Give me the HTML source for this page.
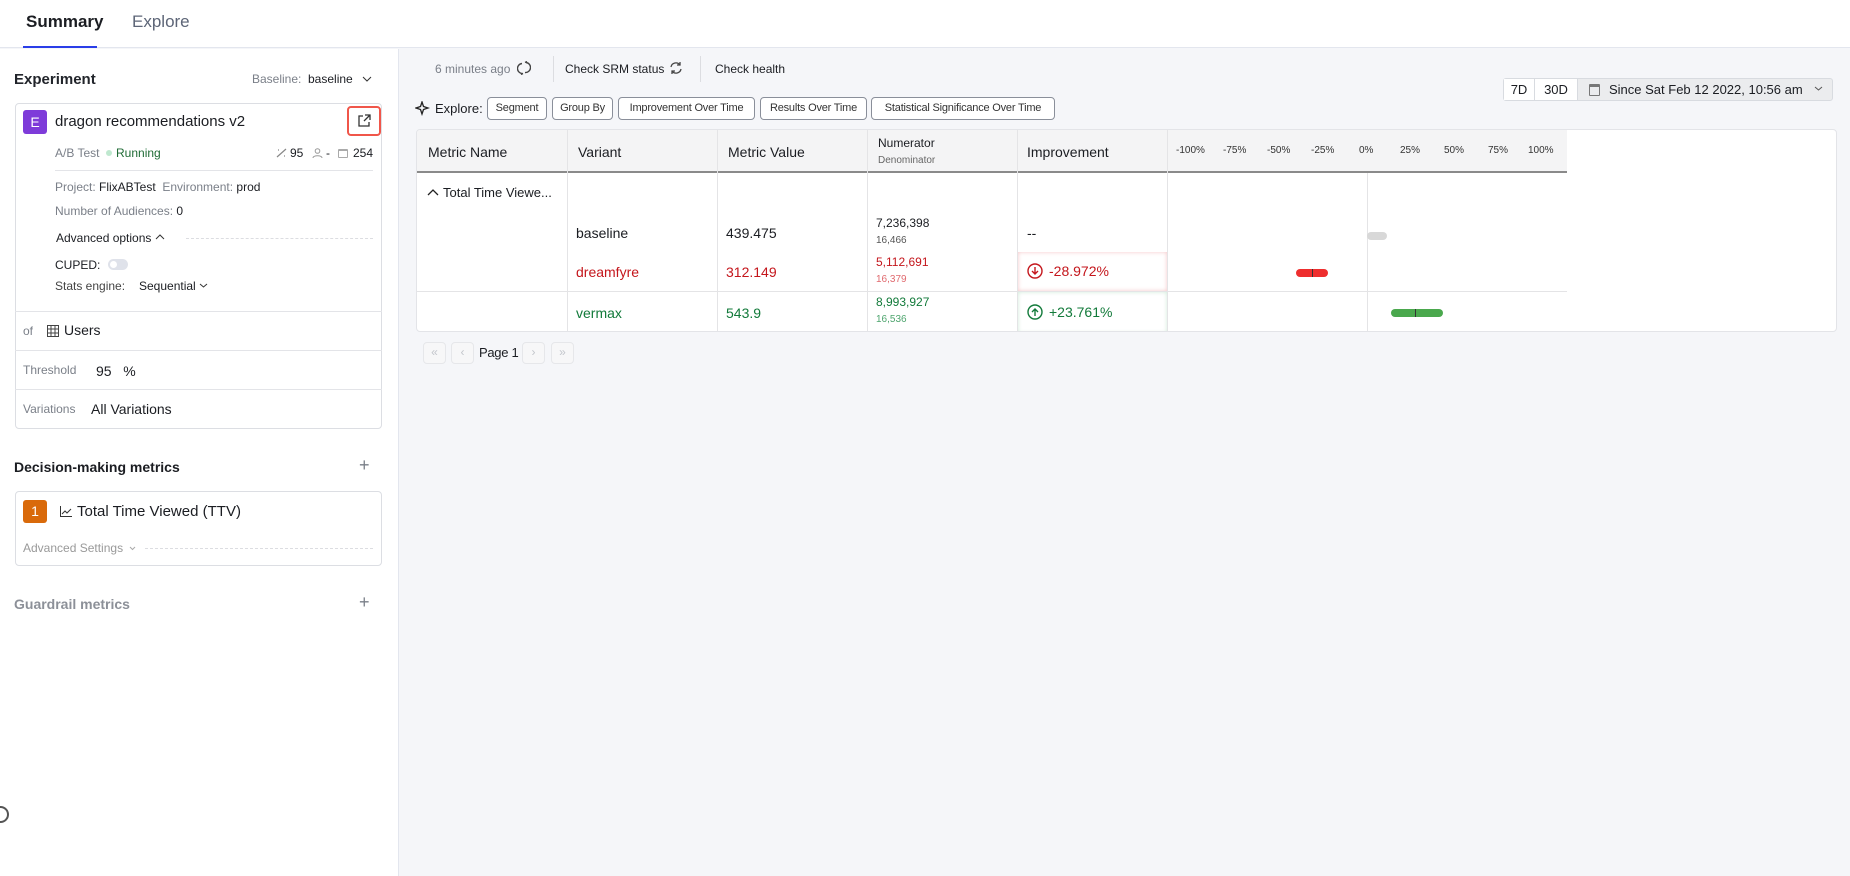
<!DOCTYPE html>
<html><head><meta charset="utf-8"><style>
*{box-sizing:border-box;margin:0;padding:0}
body{width:1850px;height:876px;position:relative;overflow:hidden;background:#f5f6f9;font-family:"Liberation Sans",sans-serif;color:#1b1d22;font-size:13px}
.a{position:absolute;white-space:nowrap}
.g{color:#7a7f88}
.chip{position:absolute;top:97px;height:23px;border:1px solid #8a8f9a;border-radius:4px;background:#fff;font-size:11px;line-height:21px;text-align:center;color:#333;letter-spacing:-0.2px}
.col{position:absolute;top:0;bottom:0;border-left:1px solid #e4e4e6}
.pg{position:absolute;top:342px;width:23px;height:22px;border:1px solid #e6e7ea;border-radius:4px;background:#f7f7f8;color:#c3c6cc;font-size:12px;text-align:center;line-height:19px}
</style></head><body>
<div class="a" style="left:0;top:0;width:1850px;height:48px;background:#fff;border-bottom:1px solid #e3e6ee"></div>
<div class="a" style="left:26px;top:12px;font-size:17px;font-weight:bold;color:#1b1d22">Summary</div>
<div class="a" style="left:132px;top:12px;font-size:17px;color:#5d6577">Explore</div>
<div class="a" style="left:23px;top:46px;width:74px;height:2px;background:#2a3ee8"></div>
<div class="a" style="left:0;top:49px;width:399px;height:827px;background:#fff;border-right:1px solid #e3e6ee"></div>
<div class="a" style="left:14px;top:71px;font-size:15px;font-weight:600;color:#22252b">Experiment</div>
<div class="a g" style="left:252px;top:72px;font-size:12px">Baseline:</div>
<div class="a" style="left:308px;top:72px;font-size:12px">baseline</div>
<svg class="a" style="left:362px;top:75px" width="10" height="8"><path d="M1 2l4 4 4-4" stroke="#333" fill="none"/></svg>
<div class="a" style="left:15px;top:103px;width:367px;height:326px;border:1px solid #dcdee3;border-radius:4px;background:#fff"></div>
<div class="a" style="left:23px;top:110px;width:24px;height:24px;background:#7e3bd9;border-radius:3px;color:#fff;font-size:14px;text-align:center;line-height:24px">E</div>
<div class="a" style="left:55px;top:113px;font-size:15px">dragon recommendations v2</div>
<div class="a" style="left:347px;top:106px;width:34px;height:30px;border:2px solid #f0564a;border-radius:4px"></div>
<svg class="a" style="left:357px;top:114px" width="14" height="14"><path d="M6 2H2v10h10V8M8 1h5v5M13 1L7 7" stroke="#333" fill="none" stroke-width="1.3"/></svg>
<div class="a g" style="left:55px;top:146px;font-size:12px">A/B Test</div>
<div class="a" style="left:106px;top:150px;width:6px;height:6px;border-radius:3px;background:#bfe8cf"></div>
<div class="a" style="left:116px;top:146px;font-size:12px;color:#1f6b35">Running</div>
<svg class="a" style="left:276px;top:148px" width="11" height="10"><path d="M1 9L10 1M2 2h1M8 8h1" stroke="#888" fill="none" stroke-width="1.2"/></svg>
<div class="a" style="left:290px;top:146px;font-size:12px">95</div>
<svg class="a" style="left:312px;top:148px" width="11" height="10"><circle cx="5.5" cy="3" r="2.3" stroke="#999" fill="none"/><path d="M1 10c0-3 9-3 9 0" stroke="#999" fill="none"/></svg>
<div class="a" style="left:326px;top:146px;font-size:12px">-</div>
<div class="a" style="left:338px;top:149px;width:10px;height:9px;border:1px solid #aaa;border-radius:1px;border-top-width:2px"></div>
<div class="a" style="left:353px;top:146px;font-size:12px">254</div>
<div class="a" style="left:55px;top:170px;width:318px;height:1px;background:#e3e4e8"></div>
<div class="a" style="left:55px;top:180px;font-size:12px"><span class="g">Project: </span>FlixABTest <span class="g">&nbsp;Environment: </span>prod</div>
<div class="a" style="left:55px;top:204px;font-size:12px"><span class="g">Number of Audiences: </span>0</div>
<div class="a" style="left:56px;top:231px;font-size:12px">Advanced options</div>
<svg class="a" style="left:155px;top:233px" width="10" height="8"><path d="M1 6l4-4 4 4" stroke="#333" fill="none"/></svg>
<div class="a" style="left:186px;top:238px;width:187px;border-top:1px dashed #dcdde1"></div>
<div class="a" style="left:55px;top:258px;font-size:12px">CUPED:</div>
<div class="a" style="left:108px;top:259px;width:20px;height:11px;border-radius:6px;background:#dfe2ea"><div style="margin:2px;width:7px;height:7px;border-radius:4px;background:#fff"></div></div>
<div class="a" style="left:55px;top:279px;font-size:12px;color:#444">Stats engine:</div>
<div class="a" style="left:139px;top:279px;font-size:12px">Sequential</div>
<svg class="a" style="left:199px;top:282px" width="9" height="7"><path d="M1 2l3.5 3L8 2" stroke="#333" fill="none"/></svg>
<div class="a" style="left:15px;top:311px;width:367px;height:1px;background:#e3e4e8"></div>
<div class="a g" style="left:23px;top:324px;font-size:12px">of</div>
<svg class="a" style="left:47px;top:325px" width="12" height="12"><rect x="0.5" y="0.5" width="11" height="11" fill="none" stroke="#444"/><path d="M0 4h12M0 8h12M4 0v12M8 0v12" stroke="#444"/></svg>
<div class="a" style="left:64px;top:322px;font-size:14px">Users</div>
<div class="a" style="left:15px;top:350px;width:367px;height:1px;background:#e3e4e8"></div>
<div class="a g" style="left:23px;top:363px;font-size:12px">Threshold</div>
<div class="a" style="left:96px;top:363px;font-size:14px">95 &nbsp;&nbsp;%</div>
<div class="a" style="left:15px;top:389px;width:367px;height:1px;background:#e3e4e8"></div>
<div class="a g" style="left:23px;top:402px;font-size:12px">Variations</div>
<div class="a" style="left:91px;top:401px;font-size:14px">All Variations</div>
<div class="a" style="left:14px;top:459px;font-size:14px;font-weight:600">Decision-making metrics</div>
<div class="a g" style="left:359px;top:455px;font-size:18px">+</div>
<div class="a" style="left:15px;top:491px;width:367px;height:75px;border:1px solid #dcdee3;border-radius:4px;background:#fff"></div>
<div class="a" style="left:23px;top:500px;width:24px;height:23px;background:#d96a0b;border-radius:3px;color:#fff;font-size:14px;text-align:center;line-height:23px">1</div>
<svg class="a" style="left:60px;top:506px" width="12" height="11"><path d="M0.5 0v10.5H12M2 8l3-3 2 2 4-4" stroke="#333" fill="none"/></svg>
<div class="a" style="left:77px;top:503px;font-size:15px">Total Time Viewed (TTV)</div>
<div class="a" style="left:23px;top:541px;font-size:12px;color:#999">Advanced Settings</div>
<svg class="a" style="left:129px;top:546px" width="7" height="5"><path d="M1 1l2.5 2.5L6 1" stroke="#aaa" fill="none"/></svg>
<div class="a" style="left:145px;top:548px;width:228px;border-top:1px dashed #dcdde1"></div>
<div class="a" style="left:14px;top:596px;font-size:14px;font-weight:600;color:#8c9098">Guardrail metrics</div>
<div class="a g" style="left:359px;top:592px;font-size:18px">+</div>
<div class="a" style="left:-8px;top:806px;width:17px;height:17px;border:2px solid #555;border-radius:9px;background:#fff"></div>
<div class="a g" style="left:435px;top:62px;font-size:12px">6 minutes ago</div>
<svg class="a" style="left:517px;top:61px" width="14" height="14"><path d="M5 2.5A5 5 0 0 0 6 12.5M9 1.5A5 5 0 0 1 8 11.5M6 12.5l-2 1M8 1.5l2-1" stroke="#444" fill="none" stroke-width="1.4"/></svg>
<div class="a" style="left:553px;top:56px;width:1px;height:26px;background:#dcdde1"></div>
<div class="a" style="left:565px;top:62px;font-size:12px">Check SRM status</div>
<svg class="a" style="left:669px;top:61px" width="14" height="14"><path d="M2 6a5 5 0 0 1 9-2M12 8a5 5 0 0 1-9 2M11 1v3H8M3 13v-3h3" stroke="#444" fill="none" stroke-width="1.3"/></svg>
<div class="a" style="left:700px;top:56px;width:1px;height:26px;background:#dcdde1"></div>
<div class="a" style="left:715px;top:62px;font-size:12px">Check health</div>
<svg class="a" style="left:415px;top:101px" width="15" height="15"><path d="M7 1l1.5 4.5L13 7l-4.5 1.5L7 13l-1.5-4.5L1 7l4.5-1.5z" stroke="#222" fill="none" stroke-width="1.3"/></svg>
<div class="a" style="left:435px;top:101px;font-size:13px">Explore:</div>
<div class="chip" style="left:487px;width:60px">Segment</div>
<div class="chip" style="left:552px;width:61px">Group By</div>
<div class="chip" style="left:618px;width:137px">Improvement Over Time</div>
<div class="chip" style="left:760px;width:107px">Results Over Time</div>
<div class="chip" style="left:871px;width:184px">Statistical Significance Over Time</div>
<div class="a" style="left:1503px;top:78px;width:330px;height:23px;border:1px solid #d8dbe0;border-radius:3px;background:#ebecee"></div>
<div class="a" style="left:1504px;top:79px;width:31px;height:21px;background:#fff;border-right:1px solid #d8dbe0;font-size:13px;text-align:center;line-height:21px">7D</div>
<div class="a" style="left:1535px;top:79px;width:43px;height:21px;background:#fff;border-right:1px solid #d8dbe0;font-size:13px;text-align:center;line-height:21px">30D</div>
<div class="a" style="left:1589px;top:84px;width:11px;height:12px;border:1px solid #777;border-radius:1px;border-top-width:3px"></div>
<div class="a" style="left:1609px;top:82px;font-size:13px">Since Sat Feb 12 2022, 10:56 am</div>
<svg class="a" style="left:1814px;top:86px" width="9" height="6"><path d="M1 1l3.5 3L8 1" stroke="#555" fill="none"/></svg>
<div class="a" style="left:416px;top:129px;width:1421px;height:203px;background:#fff;border:1px solid #e3e4e8;border-radius:4px;overflow:hidden">
 <div class="a" style="left:0;top:0;width:1150px;height:43px;background:#f4f4f5;border-bottom:2px solid #8a8a8a"></div>
 <div class="col" style="left:150px"></div>
 <div class="col" style="left:300px"></div>
 <div class="col" style="left:450px"></div>
 <div class="col" style="left:600px"></div>
 <div class="col" style="left:750px"></div>
 <div class="col" style="left:950px;top:43px"></div>
 <div class="a" style="left:0;top:161px;width:1150px;height:1px;background:#e4e4e6"></div>
 <div class="a" style="left:11px;top:14px;font-size:14px">Metric Name</div>
 <div class="a" style="left:161px;top:14px;font-size:14px">Variant</div>
 <div class="a" style="left:311px;top:14px;font-size:14px">Metric Value</div>
 <div class="a" style="left:461px;top:6px;font-size:12px">Numerator</div>
 <div class="a" style="left:461px;top:25px;font-size:10px;color:#666">Denominator</div>
 <div class="a" style="left:610px;top:14px;font-size:14px">Improvement</div>
 <div class="a" style="left:759px;top:15px;font-size:10px;color:#333;width:390px">
  <span class="a" style="left:0">-100%</span><span class="a" style="left:47px">-75%</span><span class="a" style="left:91px">-50%</span><span class="a" style="left:135px">-25%</span><span class="a" style="left:183px">0%</span><span class="a" style="left:224px">25%</span><span class="a" style="left:268px">50%</span><span class="a" style="left:312px">75%</span><span class="a" style="left:352px">100%</span>
 </div>
 <svg class="a" style="left:10px;top:58px" width="12" height="8"><path d="M1 7l5-5 5 5" stroke="#222" fill="none" stroke-width="1.3"/></svg>
 <div class="a" style="left:26px;top:55px;font-size:13px">Total Time Viewe...</div>
 <div class="a" style="left:159px;top:95px;font-size:14px">baseline</div>
 <div class="a" style="left:309px;top:95px;font-size:14px">439.475</div>
 <div class="a" style="left:459px;top:86px;font-size:12px">7,236,398</div>
 <div class="a" style="left:459px;top:105px;font-size:10px;color:#555">16,466</div>
 <div class="a" style="left:610px;top:95px;font-size:14px">--</div>
 <div class="a" style="left:159px;top:134px;font-size:14px;color:#c4161c">dreamfyre</div>
 <div class="a" style="left:309px;top:134px;font-size:14px;color:#c4161c">312.149</div>
 <div class="a" style="left:459px;top:125px;font-size:12px;color:#c4161c">5,112,691</div>
 <div class="a" style="left:459px;top:144px;font-size:10px;color:#e06a6f">16,379</div>
 <div class="a" style="left:601px;top:122px;width:149px;height:39px;background:#fff;box-shadow:inset 0 0 4px #f5c6c8"></div>
 <svg class="a" style="left:610px;top:133px" width="16" height="16"><circle cx="8" cy="8" r="7" stroke="#c4161c" fill="none" stroke-width="1.4"/><path d="M8 4v7M5 8l3 3 3-3" stroke="#c4161c" fill="none" stroke-width="1.4"/></svg>
 <div class="a" style="left:632px;top:133px;font-size:14px;color:#c4161c">-28.972%</div>
 <div class="a" style="left:159px;top:175px;font-size:14px;color:#127a3a">vermax</div>
 <div class="a" style="left:309px;top:175px;font-size:14px;color:#127a3a">543.9</div>
 <div class="a" style="left:459px;top:165px;font-size:12px;color:#127a3a">8,993,927</div>
 <div class="a" style="left:459px;top:184px;font-size:10px;color:#4ea56e">16,536</div>
 <div class="a" style="left:601px;top:162px;width:149px;height:41px;background:#fff;box-shadow:inset 0 0 4px #cfead8"></div>
 <svg class="a" style="left:610px;top:174px" width="16" height="16"><circle cx="8" cy="8" r="7" stroke="#127a3a" fill="none" stroke-width="1.4"/><path d="M8 12V5M5 8l3-3 3 3" stroke="#127a3a" fill="none" stroke-width="1.4"/></svg>
 <div class="a" style="left:632px;top:174px;font-size:14px;color:#127a3a">+23.761%</div>
 <div class="a" style="left:950px;top:102px;width:20px;height:8px;border-radius:4px;background:#d8d8d8"></div>
 <div class="a" style="left:879px;top:139px;width:32px;height:8px;border-radius:4px;background:#ee2e2e"></div>
 <div class="a" style="left:895px;top:139px;width:1px;height:8px;background:#333"></div>
 <div class="a" style="left:974px;top:179px;width:52px;height:8px;border-radius:4px;background:#4aa84d"></div>
 <div class="a" style="left:998px;top:179px;width:1px;height:8px;background:#333"></div>
</div>
<div class="pg" style="left:423px">«</div>
<div class="pg" style="left:451px">‹</div>
<div class="a" style="left:479px;top:345px;font-size:13px;letter-spacing:-0.3px">Page 1</div>
<div class="pg" style="left:522px">›</div>
<div class="pg" style="left:551px">»</div>
</body></html>
